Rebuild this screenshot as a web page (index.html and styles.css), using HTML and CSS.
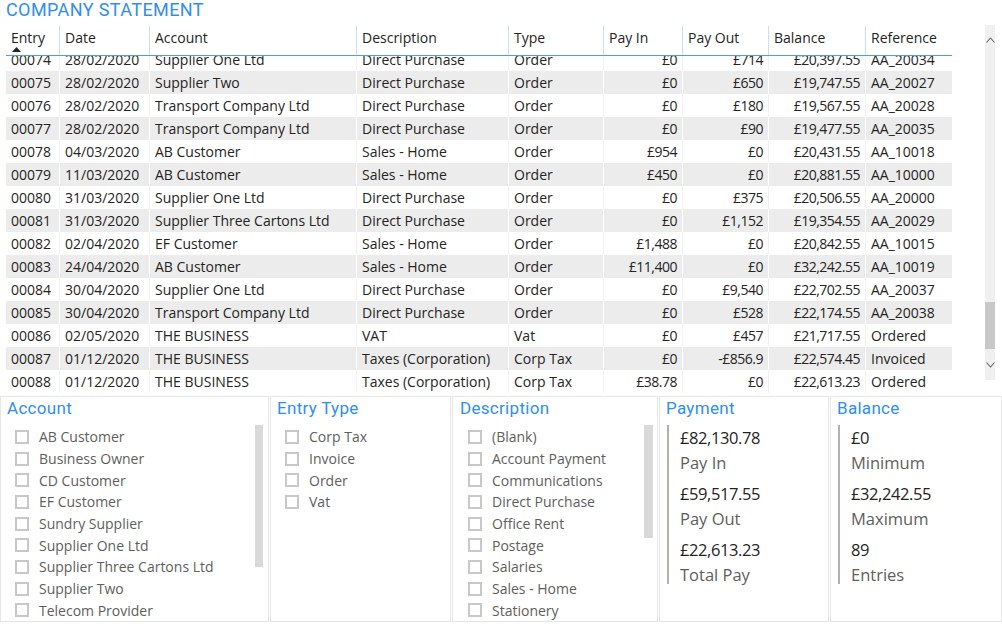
FILE: index.html
```html
<!DOCTYPE html>
<html lang="en">
<head>
<meta charset="utf-8">
<title>Company Statement</title>
<link rel="stylesheet" href="styles.css">
</head>
<body>
<h1 class="title">COMPANY STATEMENT</h1>

<section class="visual">
  <div class="table">
    <div class="row head">
      <div class="hc"><span>Entry</span><svg class="sort" width="9" height="5" viewBox="0 0 9 5"><path d="M0 5 L4.5 0 L9 5 Z" fill="#252423"/></svg></div>
      <div class="hc"><span>Date</span></div>
      <div class="hc"><span>Account</span></div>
      <div class="hc"><span>Description</span></div>
      <div class="hc"><span>Type</span></div>
      <div class="hc"><span>Pay In</span></div>
      <div class="hc"><span>Pay Out</span></div>
      <div class="hc"><span>Balance</span></div>
      <div class="hc last"><span>Reference</span></div>
    </div>
    <div class="body">
      <div class="rows">
        <div class="row"><div class="c">00074</div><div class="c">28/02/2020</div><div class="c">Supplier One Ltd</div><div class="c">Direct Purchase</div><div class="c">Order</div><div class="c n">£0</div><div class="c n">£714</div><div class="c n">£20,397.55</div><div class="c">AA_20034</div></div>
        <div class="row alt"><div class="c">00075</div><div class="c">28/02/2020</div><div class="c">Supplier Two</div><div class="c">Direct Purchase</div><div class="c">Order</div><div class="c n">£0</div><div class="c n">£650</div><div class="c n">£19,747.55</div><div class="c">AA_20027</div></div>
        <div class="row"><div class="c">00076</div><div class="c">28/02/2020</div><div class="c">Transport Company Ltd</div><div class="c">Direct Purchase</div><div class="c">Order</div><div class="c n">£0</div><div class="c n">£180</div><div class="c n">£19,567.55</div><div class="c">AA_20028</div></div>
        <div class="row alt"><div class="c">00077</div><div class="c">28/02/2020</div><div class="c">Transport Company Ltd</div><div class="c">Direct Purchase</div><div class="c">Order</div><div class="c n">£0</div><div class="c n">£90</div><div class="c n">£19,477.55</div><div class="c">AA_20035</div></div>
        <div class="row"><div class="c">00078</div><div class="c">04/03/2020</div><div class="c">AB Customer</div><div class="c">Sales - Home</div><div class="c">Order</div><div class="c n">£954</div><div class="c n">£0</div><div class="c n">£20,431.55</div><div class="c">AA_10018</div></div>
        <div class="row alt"><div class="c">00079</div><div class="c">11/03/2020</div><div class="c">AB Customer</div><div class="c">Sales - Home</div><div class="c">Order</div><div class="c n">£450</div><div class="c n">£0</div><div class="c n">£20,881.55</div><div class="c">AA_10000</div></div>
        <div class="row"><div class="c">00080</div><div class="c">31/03/2020</div><div class="c">Supplier One Ltd</div><div class="c">Direct Purchase</div><div class="c">Order</div><div class="c n">£0</div><div class="c n">£375</div><div class="c n">£20,506.55</div><div class="c">AA_20000</div></div>
        <div class="row alt"><div class="c">00081</div><div class="c">31/03/2020</div><div class="c">Supplier Three Cartons Ltd</div><div class="c">Direct Purchase</div><div class="c">Order</div><div class="c n">£0</div><div class="c n">£1,152</div><div class="c n">£19,354.55</div><div class="c">AA_20029</div></div>
        <div class="row"><div class="c">00082</div><div class="c">02/04/2020</div><div class="c">EF Customer</div><div class="c">Sales - Home</div><div class="c">Order</div><div class="c n">£1,488</div><div class="c n">£0</div><div class="c n">£20,842.55</div><div class="c">AA_10015</div></div>
        <div class="row alt"><div class="c">00083</div><div class="c">24/04/2020</div><div class="c">AB Customer</div><div class="c">Sales - Home</div><div class="c">Order</div><div class="c n">£11,400</div><div class="c n">£0</div><div class="c n">£32,242.55</div><div class="c">AA_10019</div></div>
        <div class="row"><div class="c">00084</div><div class="c">30/04/2020</div><div class="c">Supplier One Ltd</div><div class="c">Direct Purchase</div><div class="c">Order</div><div class="c n">£0</div><div class="c n">£9,540</div><div class="c n">£22,702.55</div><div class="c">AA_20037</div></div>
        <div class="row alt"><div class="c">00085</div><div class="c">30/04/2020</div><div class="c">Transport Company Ltd</div><div class="c">Direct Purchase</div><div class="c">Order</div><div class="c n">£0</div><div class="c n">£528</div><div class="c n">£22,174.55</div><div class="c">AA_20038</div></div>
        <div class="row"><div class="c">00086</div><div class="c">02/05/2020</div><div class="c">THE BUSINESS</div><div class="c">VAT</div><div class="c">Vat</div><div class="c n">£0</div><div class="c n">£457</div><div class="c n">£21,717.55</div><div class="c">Ordered</div></div>
        <div class="row alt"><div class="c">00087</div><div class="c">01/12/2020</div><div class="c">THE BUSINESS</div><div class="c">Taxes (Corporation)</div><div class="c">Corp Tax</div><div class="c n">£0</div><div class="c n">-£856.9</div><div class="c n">£22,574.45</div><div class="c">Invoiced</div></div>
        <div class="row"><div class="c">00088</div><div class="c">01/12/2020</div><div class="c">THE BUSINESS</div><div class="c">Taxes (Corporation)</div><div class="c">Corp Tax</div><div class="c n">£38.78</div><div class="c n">£0</div><div class="c n">£22,613.23</div><div class="c">Ordered</div></div>
      </div>
    </div>
  </div>
  <div class="vscroll">
    <div class="arrow"><svg width="9" height="6" viewBox="0 0 9 6"><path d="M0.5 5.5 L4.5 1 L8.5 5.5" fill="none" stroke="#666" stroke-width="1.1"/></svg></div>
    <div class="track-top"></div>
    <div class="thumb"></div>
    <div class="track-bottom"></div>
    <div class="arrow"><svg width="9" height="6" viewBox="0 0 9 6"><path d="M0.5 0.5 L4.5 5 L8.5 0.5" fill="none" stroke="#666" stroke-width="1.1"/></svg></div>
  </div>
</section>

<section class="panels">
  <div class="panel p-account">
    <h2 class="ptitle">Account</h2>
    <div class="slicer">
      <ul class="items">
        <li class="item"><span class="box"></span>AB Customer</li>
        <li class="item"><span class="box"></span>Business Owner</li>
        <li class="item"><span class="box"></span>CD Customer</li>
        <li class="item"><span class="box"></span>EF Customer</li>
        <li class="item"><span class="box"></span>Sundry Supplier</li>
        <li class="item"><span class="box"></span>Supplier One Ltd</li>
        <li class="item"><span class="box"></span>Supplier Three Cartons Ltd</li>
        <li class="item"><span class="box"></span>Supplier Two</li>
        <li class="item"><span class="box"></span>Telecom Provider</li>
      </ul>
      <div class="sbar sbar-account"></div>
    </div>
  </div>
  <div class="panel p-type">
    <h2 class="ptitle">Entry Type</h2>
    <div class="slicer">
      <ul class="items">
        <li class="item"><span class="box"></span>Corp Tax</li>
        <li class="item"><span class="box"></span>Invoice</li>
        <li class="item"><span class="box"></span>Order</li>
        <li class="item"><span class="box"></span>Vat</li>
      </ul>
    </div>
  </div>
  <div class="panel p-desc">
    <h2 class="ptitle">Description</h2>
    <div class="slicer">
      <ul class="items">
        <li class="item"><span class="box"></span>(Blank)</li>
        <li class="item"><span class="box"></span>Account Payment</li>
        <li class="item"><span class="box"></span>Communications</li>
        <li class="item"><span class="box"></span>Direct Purchase</li>
        <li class="item"><span class="box"></span>Office Rent</li>
        <li class="item"><span class="box"></span>Postage</li>
        <li class="item"><span class="box"></span>Salaries</li>
        <li class="item"><span class="box"></span>Sales - Home</li>
        <li class="item"><span class="box"></span>Stationery</li>
      </ul>
      <div class="sbar sbar-desc"></div>
    </div>
  </div>
  <div class="panel p-pay">
    <h2 class="ptitle">Payment</h2>
    <div class="card">
      <div class="metric"><div class="val">£82,130.78</div><div class="lbl">Pay In</div></div>
      <div class="metric"><div class="val">£59,517.55</div><div class="lbl">Pay Out</div></div>
      <div class="metric"><div class="val">£22,613.23</div><div class="lbl">Total Pay</div></div>
    </div>
  </div>
  <div class="panel p-bal">
    <h2 class="ptitle">Balance</h2>
    <div class="card">
      <div class="metric"><div class="val">£0</div><div class="lbl">Minimum</div></div>
      <div class="metric"><div class="val">£32,242.55</div><div class="lbl">Maximum</div></div>
      <div class="metric"><div class="val">89</div><div class="lbl">Entries</div></div>
    </div>
  </div>
</section>
</body>
</html>
```

FILE: styles.css
```css
* { box-sizing: border-box; }

html, body {
  margin: 0;
  padding: 0;
  background: #ffffff;
}

body {
  width: 1002px;
  height: 628px;
  overflow: hidden;
  font-family: "Open Sans", "Noto Sans", sans-serif;
  font-size: 14px;
  color: #252423;
}

.title {
  margin: 0;
  height: 25px;
  padding-left: 6px;
  font-family: Roboto, "Noto Sans", sans-serif;
  font-weight: 400;
  font-size: 18px;
  line-height: 19px;
  letter-spacing: 0.4px;
  color: #2f8ef2;
}

/* ---------- table visual ---------- */
.visual {
  display: flex;
  height: 370px;
}

.table {
  margin-left: 6px;
  margin-top: 1px;
  width: 946px;
}

.row {
  display: grid;
  grid-template-columns: 54px 90px 207px 152px 95px 79px 86px 97px 86px;
  height: 23px;
}

.head {
  height: 30px;
  border-bottom: 1px solid #4a9ff0;
}

.hc {
  display: flex;
  flex-direction: column;
  padding: 2px 5px 0;
  border-right: 1px solid #c6dff7;
  line-height: 20px;
  white-space: nowrap;
}

.hc.last { border-right: none; }

.sort {
  display: block;
  margin-top: -1px;
  margin-left: 1px;
}

.body {
  height: 337px;
  overflow: hidden;
}

.rows {
  margin-top: -8px;
}

.c {
  padding: 0 5px;
  line-height: 23px;
  white-space: nowrap;
  overflow: hidden;
  border-right: 1px solid #f3f3f3;
}

.c:last-child { border-right: none; }

.c.n {
  text-align: right;
  letter-spacing: -0.5px;
}

.alt { background: #ececec; }
.alt .c { border-right-color: #ffffff; }

.vscroll {
  margin-left: 33px;
  width: 10px;
  height: 355px;
  background: #f0f0f0;
  display: flex;
  flex-direction: column;
}

.arrow {
  height: 30px;
  display: flex;
  align-items: center;
  justify-content: center;
}

.track-top { height: 247px; }
.thumb { height: 47px; background: #c8c8c8; }
.track-bottom { flex: 1; }

/* ---------- bottom panels ---------- */
.panels {
  display: flex;
  gap: 1px;
  height: 226px;
  margin-top: 1px;
}

.panel {
  border: 1px solid #e6e6e6;
  height: 226px;
  overflow: hidden;
}

.p-account { width: 269px; }
.p-type { width: 181px; }
.p-desc { width: 206px; }
.p-pay { width: 170px; }
.p-bal { width: 172px; }

.ptitle {
  margin: 0;
  padding-left: 6px;
  font-family: Roboto, "Noto Sans", sans-serif;
  font-weight: 400;
  font-size: 17px;
  line-height: 22px;
  letter-spacing: 0.3px;
  color: #2f8ef2;
}

.p-desc .ptitle { padding-left: 7px; }

.slicer {
  display: flex;
  margin-top: 7px;
}

.items {
  list-style: none;
  margin: 0;
  padding: 0 0 0 14px;
  flex: 1;
}

.p-desc .items { padding-left: 15px; }

.item {
  display: flex;
  align-items: center;
  height: 21.7px;
  color: #605e5c;
  white-space: nowrap;
}

.box {
  width: 14px;
  height: 14px;
  border: 2px solid #c8c8c8;
  background: #ffffff;
  margin-right: 10px;
  flex: none;
}

.sbar {
  width: 8px;
  background: #d9d9d9;
  flex: none;
}

.sbar-account {
  height: 142px;
  margin: -1px 5px 0 0;
}

.sbar-desc {
  width: 9px;
  height: 113px;
  margin: -1px 4px 0 0;
}

.card {
  margin: 6px 0 0 7px;
  height: 159px;
  border-left: 2px solid #b3b0ad;
  padding-left: 11px;
}

.metric + .metric { margin-top: 6px; }

.val {
  font-size: 16.5px;
  line-height: 26px;
  color: #252423;
  white-space: nowrap;
  letter-spacing: -0.4px;
}

.lbl {
  font-size: 16.5px;
  line-height: 24px;
  color: #605e5c;
  white-space: nowrap;
}
```
